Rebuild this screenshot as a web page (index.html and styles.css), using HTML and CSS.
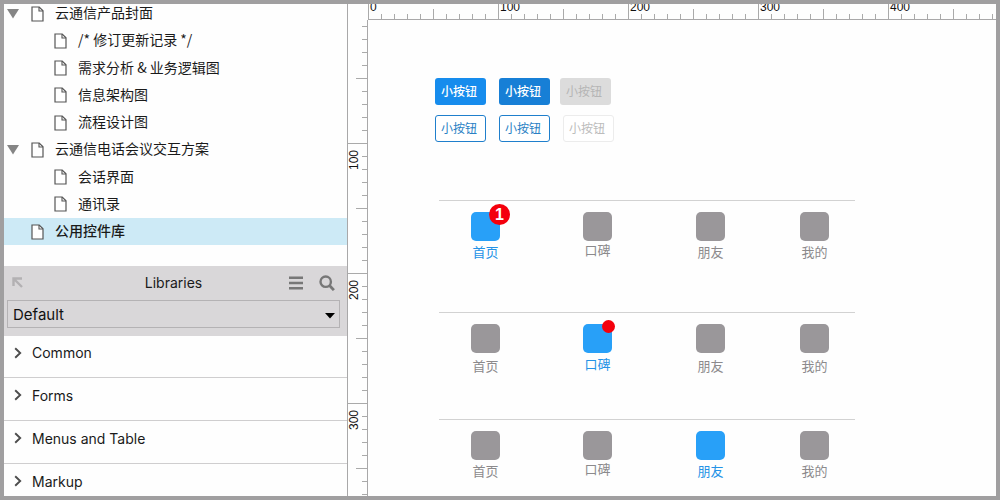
FILE: index.html
```html
<!DOCTYPE html>
<html lang="zh-CN">
<head>
<meta charset="utf-8">
<title>公用控件库</title>
<link rel="stylesheet" href="styles.css">
</head>
<body>
<svg class="defs" aria-hidden="true">
  <symbol id="doc" viewBox="0 0 13 16">
    <path d="M1 1h7.2L12 4.8V15H1z" fill="#fff" stroke="#555" stroke-width="1.2"/>
    <path d="M8 1v4h4" fill="none" stroke="#555" stroke-width="1.1"/>
  </symbol>
  <symbol id="tri" viewBox="0 0 12 10"><path d="M0 0h12L6 9.5z" fill="#858585"/></symbol>
  <symbol id="chev" viewBox="0 0 8 12"><path d="M1.2 1.2L6.2 6l-5 4.8" fill="none" stroke="#4d4d4d" stroke-width="1.9"/></symbol>
</svg>
<div class="app">
  <aside class="sidebar">
    <ul class="tree">
      <li class="row"><button class="toggle" aria-label="折叠"><svg><use href="#tri"/></svg></button><svg class="doc"><use href="#doc"/></svg><span>云通信产品封面</span></li>
      <li class="row child"><svg class="doc"><use href="#doc"/></svg><span>/* 修订更新记录 */</span></li>
      <li class="row child"><svg class="doc"><use href="#doc"/></svg><span>需求分析 &amp; 业务逻辑图</span></li>
      <li class="row child"><svg class="doc"><use href="#doc"/></svg><span>信息架构图</span></li>
      <li class="row child"><svg class="doc"><use href="#doc"/></svg><span>流程设计图</span></li>
      <li class="row"><button class="toggle" aria-label="折叠"><svg><use href="#tri"/></svg></button><svg class="doc"><use href="#doc"/></svg><span>云通信电话会议交互方案</span></li>
      <li class="row child"><svg class="doc"><use href="#doc"/></svg><span>会话界面</span></li>
      <li class="row child"><svg class="doc"><use href="#doc"/></svg><span>通讯录</span></li>
      <li class="row selected"><svg class="doc"><use href="#doc"/></svg><span>公用控件库</span></li>
    </ul>
    <section class="libraries">
      <header class="lib-head">
        <button class="tool" aria-label="弹出"><svg width="12" height="12" viewBox="0 0 12 12"><path d="M1.5 9V1.5H10M2 2l8 8" fill="none" stroke="#b3b1b3" stroke-width="2.4"/></svg></button>
        <h2 class="lib-title">Libraries</h2>
        <div class="tools">
          <button class="tool" aria-label="菜单"><svg width="14" height="14" viewBox="0 0 14 14"><path d="M0 1.8h14M0 7h14M0 12.2h14" stroke="#777" stroke-width="2.4"/></svg></button>
          <button class="tool" aria-label="搜索"><svg width="16" height="16" viewBox="0 0 16 16"><circle cx="6.7" cy="6.7" r="5.2" fill="none" stroke="#777" stroke-width="2.4"/><path d="M10.5 10.5l4.4 4.6" stroke="#777" stroke-width="2.8"/></svg></button>
        </div>
      </header>
      <div class="select-wrap">
        <select class="select" aria-label="Libraries"><option>Default</option></select>
        <svg class="caret" viewBox="0 0 10 6"><path d="M0 0h10L5 5.5z"/></svg>
      </div>
    </section>
    <div class="groups">
      <button class="group"><svg><use href="#chev"/></svg>Common</button>
      <button class="group"><svg><use href="#chev"/></svg>Forms</button>
      <button class="group"><svg><use href="#chev"/></svg>Menus and Table</button>
      <button class="group"><svg><use href="#chev"/></svg>Markup</button>
    </div>
  </aside>
  <main class="canvas">
    <div class="ruler-x"><span>0</span><span>100</span><span>200</span><span>300</span><span>400</span></div>
    <div class="ruler-y"><span>100</span><span>200</span><span>300</span></div>
    <div class="stage">
      <div class="buttons">
        <button class="btn primary">小按钮</button>
        <button class="btn primary pressed">小按钮</button>
        <button class="btn disabled" disabled>小按钮</button>
      </div>
      <div class="buttons outlined">
        <button class="btn outline">小按钮</button>
        <button class="btn outline">小按钮</button>
        <button class="btn outline faded" disabled>小按钮</button>
      </div>
      <div class="bars">
        <nav class="tabbar">
          <a class="tab active" href="#home"><span class="icon"><b class="badge">1</b></span>首页</a>
          <a class="tab raised" href="#koubei"><span class="icon"></span>口碑</a>
          <a class="tab" href="#friends"><span class="icon"></span>朋友</a>
          <a class="tab" href="#mine"><span class="icon"></span>我的</a>
        </nav>
        <nav class="tabbar roomy">
          <a class="tab" href="#home"><span class="icon"></span>首页</a>
          <a class="tab raised active" href="#koubei"><span class="icon"><i class="dot"></i></span>口碑</a>
          <a class="tab" href="#friends"><span class="icon"></span>朋友</a>
          <a class="tab" href="#mine"><span class="icon"></span>我的</a>
        </nav>
        <nav class="tabbar">
          <a class="tab" href="#home"><span class="icon"></span>首页</a>
          <a class="tab raised" href="#koubei"><span class="icon"></span>口碑</a>
          <a class="tab active" href="#friends"><span class="icon"></span>朋友</a>
          <a class="tab" href="#mine"><span class="icon"></span>我的</a>
        </nav>
      </div>
    </div>
  </main>
</div>
</body>
</html>
```
FILE: styles.css
```css
* { box-sizing: border-box; }

body {
  margin: 0;
  font-family: Inter, "Noto Sans CJK SC", sans-serif;
  font-size: 14px;
  color: #1a1a1a;
}

button {
  margin: 0;
  padding: 0;
  border: 0;
  background: none;
  font: inherit;
  color: inherit;
}

svg { display: block; }

.defs { position: absolute; width: 0; height: 0; }

.app {
  display: flex;
  height: 100vh;
  border: 4px solid #a09fa0;
  background: #fefefe;
  overflow: hidden;
}

/* Sidebar */
.sidebar {
  flex: 0 0 344px;
  display: flex;
  flex-direction: column;
  border-right: 1px solid #a9a8a9;
  overflow: hidden;
}

.tree {
  flex: none;
  display: flex;
  flex-direction: column;
  justify-content: space-between;
  height: 241px;
  margin: 0 0 21px;
  padding: 0;
  list-style: none;
  font-family: "Noto Sans CJK SC", sans-serif;
}

.row {
  display: flex;
  align-items: center;
  height: 27px;
  padding-left: 27px;
  line-height: 19px;
}

.row span { padding-bottom: 2px; }
.row:first-child { height: 23px; padding-bottom: 4px; }
.row.child { padding-left: 50px; }
.row.selected { background: #cdeaf6; font-weight: 500; }

.toggle { width: 24px; margin-left: -24px; }
.toggle svg { width: 12px; height: 10px; }

.doc { width: 13px; height: 16px; margin-right: 11px; }

.libraries {
  flex: none;
  padding: 0 7px 8px 3px;
  background: #d9d7d9;
}

.lib-head {
  display: grid;
  grid-template-columns: 1fr auto 1fr;
  align-items: center;
  height: 34px;
  padding: 0 5px;
}

.lib-title { margin: 0; font-size: 14px; font-weight: 400; line-height: 20px; }
.tools { display: flex; justify-content: flex-end; align-items: center; gap: 16px; }

.select-wrap { position: relative; }

.select {
  display: block;
  width: 100%;
  height: 28px;
  padding: 1px 5px 0;
  border: 1px solid #b4b2b4;
  border-radius: 0;
  background: #d9d7d9;
  appearance: none;
  font: 15px Inter, sans-serif;
  color: #111;
}

.caret { position: absolute; right: 5px; top: 13px; width: 10px; height: 6px; pointer-events: none; }

.group {
  display: flex;
  align-items: center;
  gap: 10px;
  width: 100%;
  height: 43px;
  padding: 0 0 8px 10px;
  border-bottom: 1px solid #cfcecf;
  text-align: left;
}

.group:first-child { height: 42px; }
.group svg { width: 8px; height: 12px; }

/* Canvas and rulers */
.canvas {
  flex: 1;
  display: grid;
  grid-template-columns: 20px 1fr;
  grid-template-rows: 16px 1fr;
  min-width: 0;
}

.ruler-x, .ruler-y {
  display: flex;
  overflow: hidden;
  font: 12px/12px "Liberation Sans", Arial, sans-serif;
  color: #111;
}

.ruler-x {
  grid-column: 2;
  border-bottom: 1px solid #a9a8a9;
  background:
    linear-gradient(to right, #aaa 1px, transparent 1px) 0 100% / 13px 5px repeat-x,
    linear-gradient(to right, #aaa 1px, transparent 1px) 0 100% / 65px 10px repeat-x,
    linear-gradient(to right, #aaa 1px, transparent 1px) 0 100% / 130px 15px repeat-x;
}

.ruler-x span { flex: 0 0 130px; margin-top: -3px; padding-left: 2px; }

.ruler-y {
  flex-direction: column;
  padding-top: 123px;
  border-right: 1px solid #a9a8a9;
  background:
    linear-gradient(#aaa 1px, transparent 1px) 100% 6px / 5px 13px repeat-y,
    linear-gradient(#aaa 1px, transparent 1px) 100% 58px / 11px 65px repeat-y,
    linear-gradient(#aaa 1px, transparent 1px) 100% 123px / 19px 130px repeat-y;
}

.ruler-y span {
  flex: 0 0 130px;
  width: 12px;
  padding-bottom: 7px;
  writing-mode: vertical-rl;
  transform: rotate(180deg);
  text-align: right;
}

.stage {
  min-width: 0;
  padding: 58px 16px 0 67px;
  font-family: "Noto Sans CJK SC", sans-serif;
}

.buttons { display: flex; gap: 13px; margin-bottom: 10px; }

.btn {
  width: 51px;
  height: 27px;
  padding: 0 3px 1px 0;
  border-radius: 3px;
  font-size: 12px;
  line-height: 18px;
}

.primary { background: #168ced; color: #fff; font-weight: 500; }
.pressed { background: #177fd6; }
.disabled { margin-left: -3px; background: #dcdcdc; color: #b5b5b5; }
.outline { border: 1px solid #1f7fcc; background: #fff; color: #2a7fc4; }
.faded { border-color: #ececec; color: #bcbcbc; }

/* Tab bars */
.bars {
  display: grid;
  grid-template-rows: 112px 107px auto;
  width: 416px;
  max-width: 100%;
  margin: 58px 0 0 4px;
}

.tabbar {
  display: grid;
  grid-template-columns: 112fr 113fr 104fr 55fr;
  align-items: start;
  justify-items: start;
  padding: 11px 0 0 32px;
  border-top: 1px solid #d2d2d2;
}

.tab {
  display: flex;
  flex-direction: column;
  align-items: center;
  gap: 2px;
  width: 29px;
  font-size: 13px;
  line-height: 18px;
  white-space: nowrap;
  color: #8c8a8c;
  text-decoration: none;
}

.raised { gap: 0; }
.roomy .tab { gap: 4px; }
.roomy .raised { gap: 2px; }
.active { color: #2492e6; }

.icon { position: relative; width: 29px; height: 29px; border-radius: 5px; background: #9a979a; }
.active .icon { background: #28a0f8; }

.badge {
  position: absolute;
  top: -8px;
  left: 18px;
  width: 21px;
  height: 21px;
  border-radius: 50%;
  background: #f4000c;
  color: #fff;
  font: bold 16px/21px "Liberation Sans", Arial, sans-serif;
  text-align: center;
}

.dot {
  position: absolute;
  top: -4px;
  left: 19px;
  width: 13px;
  height: 13px;
  border-radius: 50%;
  background: #f4000c;
}
```
